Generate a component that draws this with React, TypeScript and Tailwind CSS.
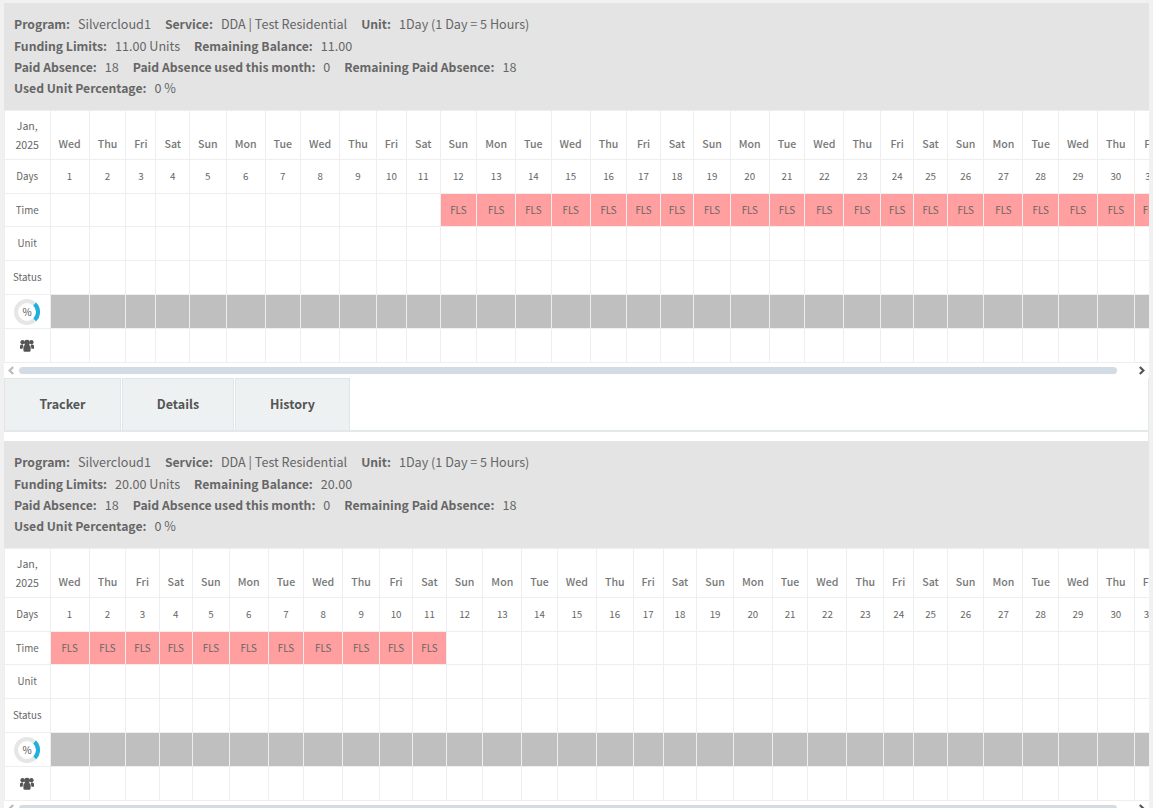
const weekNames = ['Wed', 'Thu', 'Fri', 'Sat', 'Sun', 'Mon', 'Tue'];
const days = Array.from({ length: 31 }, (_, i) => i + 1);

const cellClass = 'border border-[#eeeeee] px-2 text-center align-middle';
const infoRow = 'h-[21.3px]';

const UsedRing = () => (
  <svg width="26" height="26" viewBox="0 0 26 26" className="mx-auto block">
    <circle cx="13" cy="13" r="11" fill="#ffffff" stroke="#e6e6e6" strokeWidth="4" />
    <path d="M20.6 5 A11 11 0 0 1 20.8 20.8" fill="none" stroke="#1fb0dc" strokeWidth="4" />
    <text x="13" y="16.5" textAnchor="middle" fontSize="10" fill="#555555">
      %
    </text>
  </svg>
);

const UsersIcon = () => (
  <svg width="14" height="13" viewBox="0 0 14 13" fill="#555555" className="mx-auto block">
    <circle cx="7" cy="3.6" r="2.9" />
    <circle cx="2.5" cy="3.2" r="2.1" />
    <circle cx="11.5" cy="3.2" r="2.1" />
    <path d="M3.4 8a2 2 0 0 1 2-2h3.2a2 2 0 0 1 2 2v3.4a1.4 1.4 0 0 1-1.4 1.4H4.8a1.4 1.4 0 0 1-1.4-1.4z" />
    <path d="M0 7a1.6 1.6 0 0 1 1.6-1.6h1.6L2.6 9.8H0z" />
    <path d="M14 7a1.6 1.6 0 0 0-1.6-1.6h-1.6l.6 4.4H14z" />
  </svg>
);

const Chevron = ({ dir, color }: { dir: 'left' | 'right'; color: string }) => (
  <svg width="9" height="9" viewBox="0 0 9 9" fill="none" stroke={color} strokeWidth="2.2" className="shrink-0">
    <path d={dir === 'left' ? 'M6.2 1 2.6 4.5 6.2 8' : 'M2.8 1 6.4 4.5 2.8 8'} />
  </svg>
);

const Info = ({ label, value, last }: { label: string; value: string; last?: boolean }) => (
  <span className={last ? '' : 'mr-3.5'}>
    <span className="mr-2 text-[12.2px] font-semibold">{label}</span>
    {value}
  </span>
);

const PlanBlock = ({ limit, from, to }: { limit: string; from: number; to: number }) => (
  <section>
    <div className="h-[107px] bg-[#e4e4e4] px-2.5 pt-[10.4px] text-[12.6px] leading-[21px] text-[#666666]">
      <div className={infoRow}>
        <Info label="Program:" value="Silvercloud1" />
        <Info label="Service:" value="DDA | Test Residential" />
        <Info label="Unit:" value="1Day (1 Day = 5 Hours)" last />
      </div>
      <div className={infoRow}>
        <Info label="Funding Limits:" value={`${limit} Units`} />
        <Info label="Remaining Balance:" value={limit} last />
      </div>
      <div className={infoRow}>
        <Info label="Paid Absence:" value="18" />
        <Info label="Paid Absence used this month:" value="0" />
        <Info label="Remaining Paid Absence:" value="18" last />
      </div>
      <div className={infoRow}>
        <Info label="Used Unit Percentage:" value="0 %" last />
      </div>
    </div>

    <div className="overflow-hidden">
      <table className="border-collapse text-[9.75px] text-[#666666]">
        <tbody>
          <tr className="h-[49px]">
            <td className={`${cellClass} text-[10.6px] leading-[19px]`}>
              Jan,
              <br />
              2025
            </td>
            {days.map((d) => (
              <td key={d} className={`${cellClass} text-[10.6px] font-medium whitespace-nowrap text-[#777777]`}>
                <span className="relative top-[9px] block">{weekNames[(d - 1) % 7]}</span>
              </td>
            ))}
          </tr>
          <tr className="h-[34px]">
            <td className={cellClass}>Days</td>
            {days.map((d) => (
              <td key={d} className={cellClass}>
                {d}
              </td>
            ))}
          </tr>
          <tr className="h-[33px]">
            <td className={cellClass}>Time</td>
            {days.map((d) =>
              d >= from && d <= to ? (
                <td key={d} className={`${cellClass} bg-[#ff9f9f]`}>
                  FLS
                </td>
              ) : (
                <td key={d} className={cellClass} />
              )
            )}
          </tr>
          <tr className="h-[34px]">
            <td className={cellClass}>Unit</td>
            {days.map((d) => (
              <td key={d} className={cellClass} />
            ))}
          </tr>
          <tr className="h-[34px]">
            <td className={cellClass}>Status</td>
            {days.map((d) => (
              <td key={d} className={cellClass} />
            ))}
          </tr>
          <tr className="h-[34px]">
            <td className="border border-[#eeeeee] text-center">
              <UsedRing />
            </td>
            {days.map((d) => (
              <td key={d} className={`${cellClass} bg-[#bfbfbf]`} />
            ))}
          </tr>
          <tr className="h-[34px]">
            <td className={cellClass}>
              <UsersIcon />
            </td>
            {days.map((d) => (
              <td key={d} className={cellClass} />
            ))}
          </tr>
        </tbody>
      </table>
    </div>

    <div className="flex h-[15px] items-center">
      <div className="ml-[3px]">
        <Chevron dir="left" color="#bbbbbb" />
      </div>
      <div className="ml-[3px] h-[7px] w-[1098px] rounded-full bg-[#d3dce5]" />
      <div className="ml-[20px]">
        <Chevron dir="right" color="#555555" />
      </div>
    </div>
  </section>
);

export default function App() {
  return (
    <div className="h-[808px] overflow-hidden bg-[#f1f1f1] px-1 pt-[3px] font-['Noto_Sans_CJK_SC','Source_Sans_Pro','Noto_Sans',sans-serif]">
      <div className="h-full bg-white">
        <PlanBlock limit="11.00" from={12} to={31} />
        <div className="border-b-2 border-[#e3e8ea] border-r border-r-[#e3e8ea]">
          <div className="flex h-[52px] gap-px bg-white text-[12.5px] font-semibold text-[#555555]">
            {['Tracker', 'Details', 'History'].map((tab, i) => (
              <div
                key={tab}
                className={`flex items-center justify-center border border-b-0 border-[#e0e6e8] bg-[#edf1f2] pb-px ${
                  i === 0 ? 'w-[117px]' : i === 1 ? 'w-[112px]' : 'w-[115px]'
                }`}
              >
                {tab}
              </div>
            ))}
          </div>
        </div>
        <div className="h-[9px] border-r border-[#e3e8ea]" />
        <PlanBlock limit="20.00" from={1} to={11} />
      </div>
    </div>
  );
}
